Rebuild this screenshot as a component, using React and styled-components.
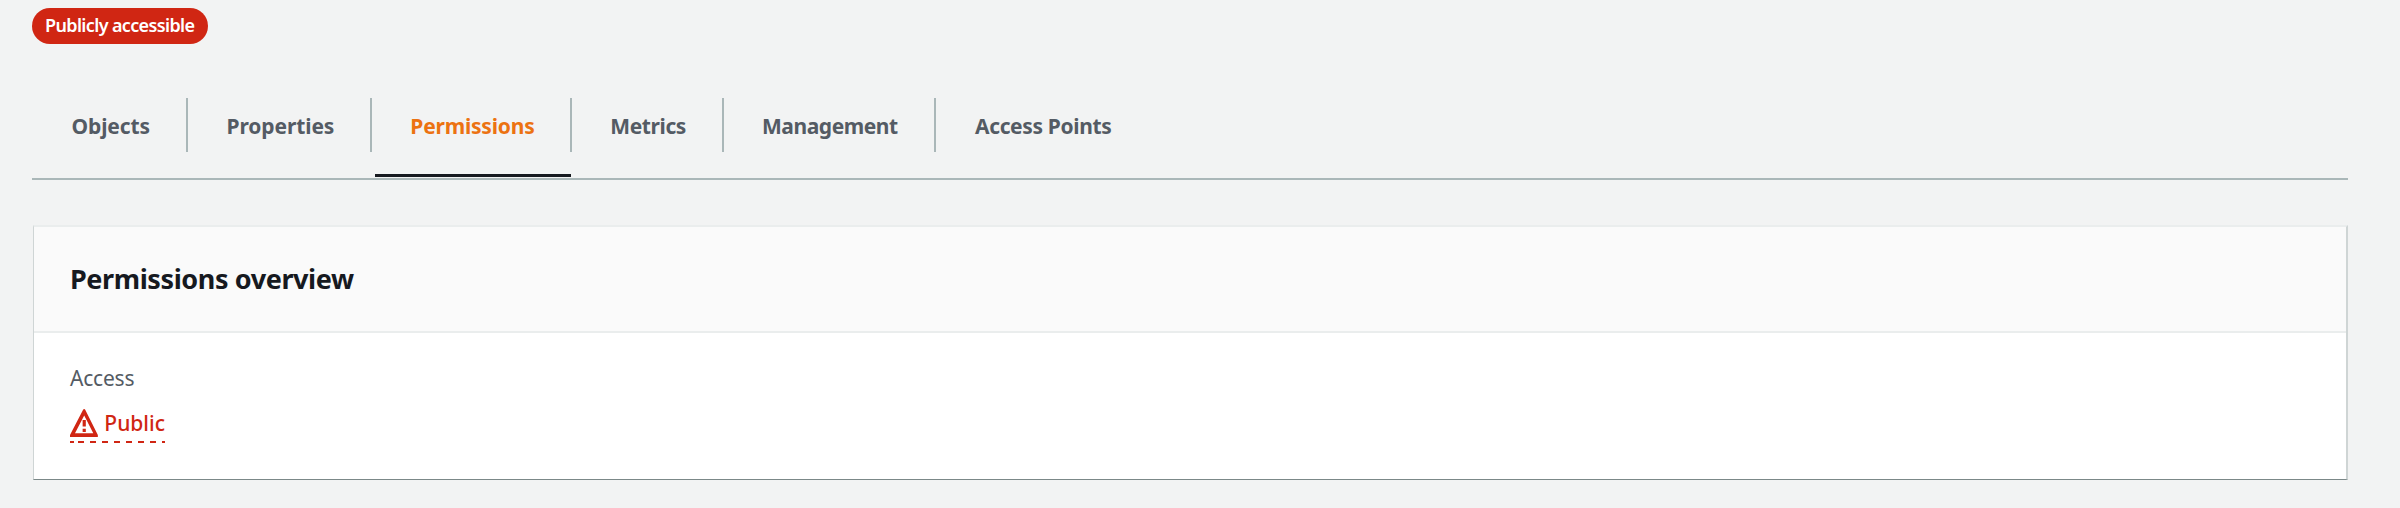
import React from "react";
import styled, { createGlobalStyle } from "styled-components";

const GlobalStyle = createGlobalStyle`
  * { box-sizing: border-box; }
  body {
    margin: 0;
    background: #f2f3f3;
    font-family: "Noto Sans", "Open Sans", sans-serif;
    color: #16191f;
  }
`;

const Page = styled.main`
  height: 508px;
  padding: 8px 52px 0 32px;
  background: #f2f3f3;
`;

const Badge = styled.div`
  width: 176px;
  height: 36px;
  padding-left: 13px;
  border-radius: 18px;
  background: #d02613;
  color: #fff;
  font-size: 18px;
  font-weight: 600;
  line-height: 34px;
  letter-spacing: -0.64px;
  white-space: nowrap;
`;

const TabBar = styled.nav`
  display: flex;
  height: 82px;
  margin-top: 54px;
  border-bottom: 2px solid #aab7b8;
`;

const Tab = styled.a`
  position: relative;
  width: ${(p) => p.$width}px;
  height: 54px;
  padding-left: ${(p) => p.$indent || 38}px;
  border-right: ${(p) => (p.$last ? "0" : "2px solid #aab7b8")};
  color: ${(p) => (p.$active ? "#ec7211" : "#545b64")};
  font-size: 21px;
  font-weight: 700;
  line-height: 56px;
  letter-spacing: ${(p) => p.$tracking || 0}px;
  white-space: nowrap;

  &::after {
    content: "";
    display: ${(p) => (p.$active ? "block" : "none")};
    position: absolute;
    left: 3px;
    right: -1px;
    top: 76px;
    height: 3px;
    background: #16191f;
  }
`;

const Card = styled.section`
  margin: 45px 0 0 1px;
  height: 255px;
  border: solid;
  border-width: 2px 2px 1px 1px;
  border-color: #eaeded #cfd5d5 #7b8888 #cfd5d5;
  background: #fff;
`;

const CardHeader = styled.header`
  height: 106px;
  padding-left: 36px;
  background: #fafafa;
  border-bottom: 2px solid #eaeded;
`;

const Title = styled.h2`
  margin: 0;
  font-size: 27px;
  font-weight: 700;
  line-height: 103px;
  letter-spacing: -0.4px;
`;

const CardBody = styled.div`
  padding: 30px 36px;
`;

const Label = styled.div`
  color: #545b64;
  font-size: 21px;
  line-height: 30px;
  letter-spacing: -0.2px;
`;

const Status = styled.div`
  display: flex;
  flex-direction: column;
  width: 95px;
  margin-top: 16px;
  color: #d02613;
`;

const StatusLine = styled.div`
  display: flex;
  height: 32px;
  gap: 6.5px;
  font-size: 21px;
  font-weight: 500;
  line-height: 28px;
`;

const Underline = styled.div`
  height: 2px;
  background:
    linear-gradient(#d02613, #d02613) 0 0 / 4px 2px no-repeat,
    repeating-linear-gradient(90deg, #d02613 0 6px, transparent 6px 12px) 8px 0 / 120px 2px no-repeat;
`;

const WarningIcon = () => (
  <svg width="28" height="28" viewBox="0 0 28 28" fill="none" aria-hidden="true">
    <path
      fillRule="evenodd"
      fill="#d02613"
      d="M13.3 .4Q14.5-.4 15.3.6L28 26V28H0V26ZM14.3 6.4 5 24.4H23.4Z"
    />
    <path d="M14.3 11v6.5M14.3 19.7v3.4" stroke="#d02613" strokeWidth="3.2" />
  </svg>
);

const tabs = [
  { label: "Objects", width: 156, indent: 39.5, tracking: -0.1 },
  { label: "Properties", width: 184, indent: 38.5, tracking: -0.1 },
  { label: "Permissions", width: 200, indent: 38.3, tracking: -0.2, active: true },
  { label: "Metrics", width: 152, indent: 38.3, tracking: -0.4 },
  { label: "Management", width: 212, tracking: -0.45 },
  { label: "Access Points", width: 220, indent: 39, tracking: -0.36, last: true },
];

export default function App() {
  return (
    <Page>
      <GlobalStyle />
      <Badge>Publicly accessible</Badge>
      <TabBar>
        {tabs.map((t) => (
          <Tab key={t.label} $width={t.width} $indent={t.indent} $tracking={t.tracking} $active={t.active} $last={t.last}>
            {t.label}
          </Tab>
        ))}
      </TabBar>
      <Card>
        <CardHeader>
          <Title>Permissions overview</Title>
        </CardHeader>
        <CardBody>
          <Label>Access</Label>
          <Status>
            <StatusLine>
              <WarningIcon />
              <span>Public</span>
            </StatusLine>
            <Underline />
          </Status>
        </CardBody>
      </Card>
    </Page>
  );
}
